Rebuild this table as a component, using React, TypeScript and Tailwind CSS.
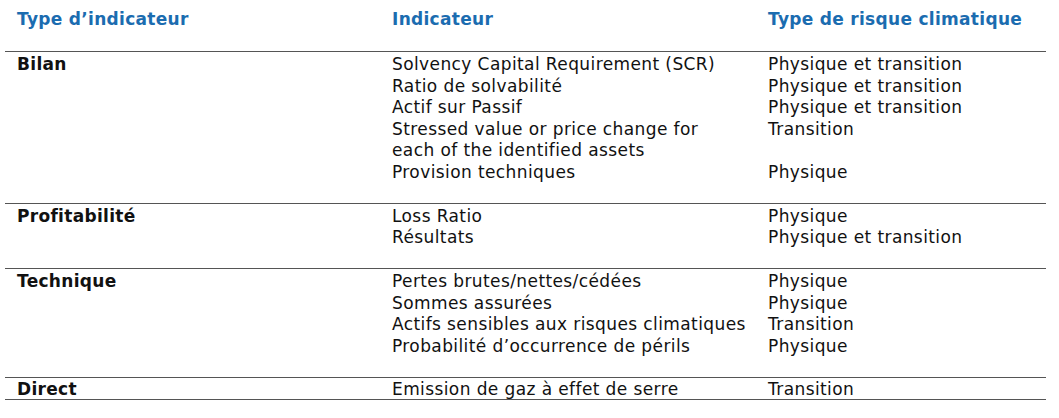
import React from "react";

type Row = { cat: string; items: [React.ReactNode, string][]; last?: boolean };

const rows: Row[] = [
  {
    cat: "Bilan",
    items: [
      ["Solvency Capital Requirement (SCR)", "Physique et transition"],
      ["Ratio de solvabilité", "Physique et transition"],
      ["Actif sur Passif", "Physique et transition"],
      [
        <>
          Stressed value or price change for
          <br />
          each of the identified assets
        </>,
        "Transition",
      ],
      ["Provision techniques", "Physique"],
    ],
  },
  {
    cat: "Profitabilité",
    items: [
      ["Loss Ratio", "Physique"],
      ["Résultats", "Physique et transition"],
    ],
  },
  {
    cat: "Technique",
    items: [
      ["Pertes brutes/nettes/cédées", "Physique"],
      ["Sommes assurées", "Physique"],
      ["Actifs sensibles aux risques climatiques", "Transition"],
      ["Probabilité d\u2019occurrence de périls", "Physique"],
    ],
  },
  {
    cat: "Direct",
    items: [["Emission de gaz à effet de serre", "Transition"]],
    last: true,
  },
];

export default function App() {
  return (
    <div
      className="w-[1059px] h-[418px] bg-white text-[17px] leading-[21.5px] tracking-[0.4px] text-[#111]"
      style={{ fontFamily: '"DejaVu Sans", Verdana, sans-serif' }}
    >
      <div className="ml-[5px] w-[1041px]">
        <div className="grid grid-cols-[375px_376px_1fr] pl-[12px] pt-[9px] pb-[20.5px] font-bold tracking-[0.3px] text-[#1b6cb0]">
          <div>Type d&rsquo;indicateur</div>
          <div>Indicateur</div>
          <div>Type de risque climatique</div>
        </div>
        {rows.map((r) => (
          <div
            key={r.cat}
            className={`grid grid-cols-[375px_376px_1fr] pl-[12px] border-t border-[#555] ${
              r.last ? "pt-[2px] pb-0 leading-[19px] border-b" : "pt-[2px] pb-[19.5px]"
            }`}
          >
            <div className="font-bold tracking-[0.3px]">{r.cat}</div>
            <div className="col-span-2 flex flex-col">
              {r.items.map(([a, b], i) => (
                <div key={i} className="grid grid-cols-[376px_1fr]">
                  <div>{a}</div>
                  <div>{b}</div>
                </div>
              ))}
            </div>
          </div>
        ))}
      </div>
    </div>
  );
}
